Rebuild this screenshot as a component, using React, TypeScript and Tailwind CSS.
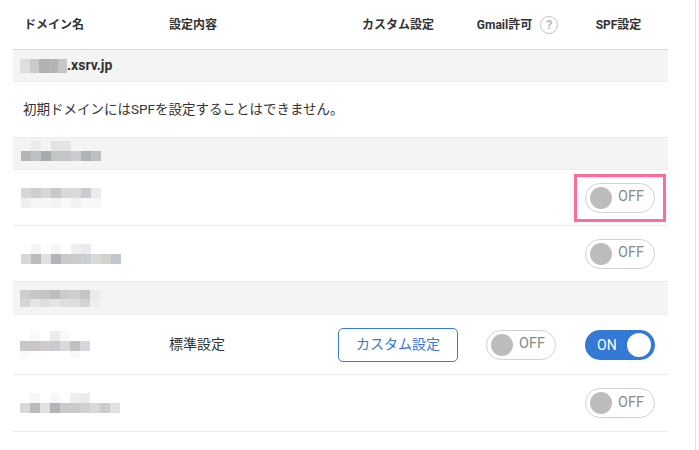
import React from "react";

type Cells = string[];

function Mosaic({ rows, h }: { rows: Cells[]; h?: number[] }) {
  return (
    <div className="flex flex-col">
      {rows.map((r, i) => (
        <div key={i} className="flex">
          {r.map((c, j) => (
            <div
              key={j}
              className={`w-[10px] ${c}`}
              style={{ height: h ? h[i] : 10 }}
            />
          ))}
        </div>
      ))}
    </div>
  );
}

function Toggle({ on }: { on?: boolean }) {
  if (on) {
    return (
      <div className="relative w-[70px] h-[30px] rounded-full bg-[#3579d6] flex items-center">
        <span className="ml-[12px] text-[14px] text-white leading-none">ON</span>
        <div className="absolute right-[4px] top-[3px] w-[24px] h-[24px] rounded-full bg-white" />
      </div>
    );
  }
  return (
    <div className="relative w-[70px] h-[30px] rounded-full border border-[#d2d2d2] bg-white flex items-center">
      <div className="absolute left-[4px] top-[3px] w-[22px] h-[22px] rounded-full bg-[#bcbcbc]" />
      <span className="ml-[32px] text-[14.5px] text-[#8a8a8a] leading-none">OFF</span>
    </div>
  );
}

const grid = "grid grid-cols-[156px_169px_120px_124px_86px]";

export default function App() {
  return (
    <div className="w-[699px] h-[450px] bg-white font-[Roboto,'Noto_Sans_CJK_JP',sans-serif] text-[#333]">
      <div className="w-[696px] h-[450px] border-r border-[#e3e3e3]">
        <div className="ml-[13px] w-[655px]">
          {/* header */}
          <div className={`${grid} h-[50px] border-b border-[#dadada] items-center text-[12px] font-bold`}>
            <div className="pl-[11px]">ドメイン名</div>
            <div>設定内容</div>
            <div className="text-center">カスタム設定</div>
            <div className="flex items-center justify-center pr-[5px]">
              <span>Gmail許可</span>
              <span className="ml-[8px] w-[18px] h-[18px] rounded-full border-[1.5px] border-[#c4c4c4] text-[#b8b8b8] flex items-center justify-center text-[13px] font-bold leading-none">
                ?
              </span>
            </div>
            <div className="text-center pr-[13px]">SPF設定</div>
          </div>

          {/* xsrv row */}
          <div className="h-[32px] bg-[#f4f4f4] border-b border-[#ececec] flex items-center pl-[7px]">
            <div className="flex h-[14px]">
              <div className="w-[10px] bg-[#dedede]" />
              <div className="w-[9px] bg-[#cbcbcb]" />
              <div className="w-[10px] bg-[#b1b1b1]" />
              <div className="w-[9px] bg-[#b4b4b4]" />
              <div className="w-[9px] bg-[#c6c6c6]" />
            </div>
            <span className="text-[14px] font-bold">.xsrv.jp</span>
          </div>

          {/* message */}
          <div className="h-[56px] border-b border-[#ececec] flex items-center pl-[10px] text-[13.5px]">
            初期ドメインにはSPFを設定することはできません。
          </div>

          {/* group 2 */}
          <div className="h-[32px] bg-[#f4f4f4] border-b border-[#ececec] pl-[8px] pt-[3px]">
            <Mosaic
              rows={[
                ["", "bg-[#ebebeb]", "", "bg-[#e3e3e3]", "bg-[#e4e4e4]", "", "", ""],
                ["bg-[#b5b5b7]", "bg-[#bdc0c3]", "bg-[#a9abab]", "bg-[#c4c6c6]", "bg-[#c3c6c8]", "bg-[#cbcbcb]", "bg-[#afb3b6]", "bg-[#bcbfbf]"],
              ]}
            />
          </div>

          {/* row B */}
          <div className={`${grid} h-[56px] border-b border-[#ececec] items-center`}>
            <div className="pl-[8px]">
              <Mosaic
                rows={[
                  ["bg-[#d7d7d9]", "bg-[#cfcdcd]", "bg-[#d7d7d7]", "bg-[#c5c9cc]", "bg-[#d9d9d9]", "bg-[#dadada]", "bg-[#c8ccd0]", "bg-[#ebebeb]"],
                  ["bg-[#efefef]", "bg-[#f5f5f5]", "bg-[#f5f6f8]", "bg-[#f3f3f3]", "bg-[#f7f8f8]", "bg-[#f1f1f1]", "bg-[#f7f8f8]", "bg-[#f8f8f8]"],
                ]}
              />
            </div>
            <div />
            <div />
            <div />
            <div className="pl-[3px]">
              <div className="relative w-[70px]">
                <Toggle />
                <div className="absolute left-[-11px] top-[-9px] w-[92px] h-[48px] border-[3px] border-[#ff6b9c]" />
              </div>
            </div>
          </div>

          {/* row C */}
          <div className={`${grid} h-[56px] border-b border-[#ececec] items-center`}>
            <div className="pl-[8px]">
              <Mosaic
                rows={[
                  ["", "bg-[#f5f5f5]", "", "bg-[#f5f5f5]", "", "bg-[#f0efee]", "bg-[#e8ecee]", "", "", ""],
                  ["bg-[#d6d6d6]", "bg-[#bcbcbc]", "bg-[#e0e0e0]", "bg-[#b3b3b9]", "bg-[#cacaca]", "bg-[#cbcbcb]", "bg-[#cbcfd3]", "bg-[#d9d9d9]", "bg-[#d3d1ce]", "bg-[#c1c5cc]"],
                ]}
              />
            </div>
            <div />
            <div />
            <div />
            <div className="pl-[3px]">
              <Toggle />
            </div>
          </div>

          {/* group 3 */}
          <div className="h-[33px] bg-[#f4f4f4] border-b border-[#ececec] pl-[7px] pt-[8px]">
            <Mosaic
              h={[9, 8]}
              rows={[
                ["bg-[#cfcdcd]", "bg-[#c6c8c8]", "bg-[#c4c4c4]", "bg-[#bdbdbd]", "bg-[#c8cccd]", "bg-[#cfcfcf]", "bg-[#c2c3c4]", "bg-[#e7ebed]"],
                ["bg-[#d6d6d6]", "bg-[#e5e5e5]", "bg-[#e0dede]", "bg-[#e3e6e6]", "bg-[#dcdfe1]", "bg-[#dedede]", "bg-[#d3d3d3]", "bg-[#eeeeee]"],
              ]}
            />
          </div>

          {/* row E */}
          <div className={`${grid} h-[60px] border-b border-[#ececec] items-center`}>
            <div className="pl-[7px]">
              <Mosaic
                h={[10, 10, 7]}
                rows={[
                  ["", "bg-[#f9f9f9]", "", "bg-[#ececec]", "bg-[#f8f9fa]", "", ""],
                  ["bg-[#c8c8c8]", "bg-[#cac4c2]", "bg-[#cccccc]", "bg-[#c7cbcf]", "bg-[#d9d9d9]", "bg-[#c0c0c2]", "bg-[#d4d7da]"],
                  ["bg-[#fafafa]", "", "", "", "", "bg-[#f8f8f8]", ""],
                ]}
              />
            </div>
            <div className="text-[14px]">標準設定</div>
            <div className="flex justify-center">
              <div className="w-[120px] h-[34px] rounded-[5px] border border-[#3a7bd5] text-[#3a78d0] text-[14px] flex items-center justify-center">
                カスタム設定
              </div>
            </div>
            <div className="pl-[28px]">
              <Toggle />
            </div>
            <div className="pl-[3px]">
              <Toggle on />
            </div>
          </div>

          {/* row F */}
          <div className={`${grid} h-[57px] border-b border-[#ececec] items-center`}>
            <div className="pl-[7px]">
              <Mosaic
                rows={[
                  ["", "bg-[#f7f7f7]", "", "bg-[#f7f7f7]", "", "bg-[#f0efee]", "bg-[#e8ecee]", "", "", ""],
                  ["bg-[#d9d9d9]", "bg-[#bbbbbb]", "bg-[#e0e0e0]", "bg-[#b4b3b9]", "bg-[#cacaca]", "bg-[#c9c9c9]", "bg-[#cdd1d4]", "bg-[#d9d9d9]", "bg-[#cccccc]", "bg-[#e0e3e6]"],
                ]}
              />
            </div>
            <div />
            <div />
            <div />
            <div className="pl-[3px]">
              <Toggle />
            </div>
          </div>
        </div>
      </div>
    </div>
  );
}
